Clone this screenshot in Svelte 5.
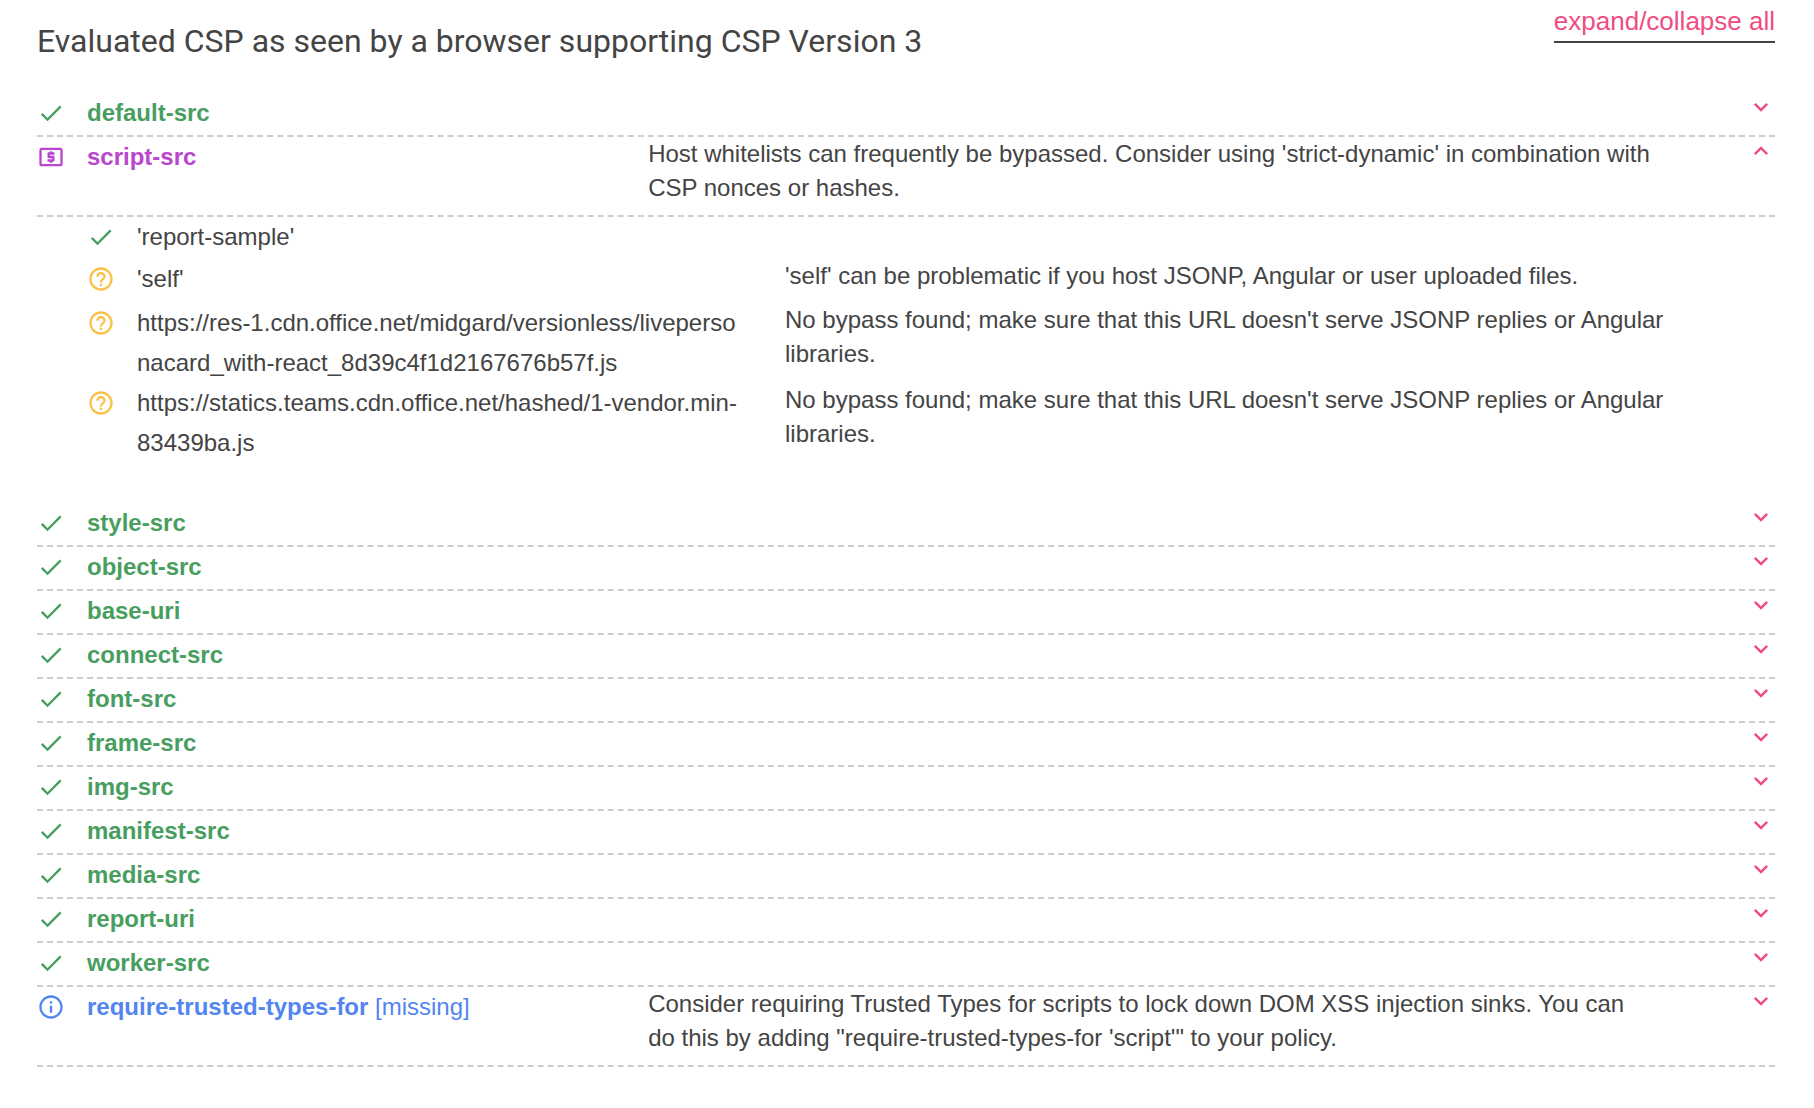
<script>
  const CHECK = 'M9 16.2L4.8 12l-1.4 1.4L9 19 21 7l-1.4-1.4L9 16.2z';

  const icons = {
    ok: CHECK,
    medium:
      'M11 17h2v-1h1c.55 0 1-.45 1-1v-3c0-.55-.45-1-1-1h-3v-1h4V8h-2V7h-2v1h-1c-.55 0-1 .45-1 1v3c0 .55.45 1 1 1h3v1H9v2h2v1zm9-13H4c-1.11 0-1.99.89-1.99 2L2 18c0 1.11.89 2 2 2h16c1.11 0 2-.89 2-2V6c0-1.11-.89-2-2-2zm0 14H4V6h16v12z',
    maybe:
      'M11 18h2v-2h-2v2zm1-16C6.48 2 2 6.48 2 12s4.48 10 10 10 10-4.48 10-10S17.52 2 12 2zm0 18c-4.41 0-8-3.59-8-8s3.59-8 8-8 8 3.59 8 8-3.59 8-8 8zm0-14c-2.21 0-4 1.79-4 4h2c0-1.1.9-2 2-2s2 .9 2 2c0 2-3 1.75-3 5h2c0-2.25 3-2.5 3-5 0-2.21-1.79-4-4-4z',
    info:
      'M11 17h2v-6h-2v6zm1-15C6.48 2 2 6.48 2 12s4.48 10 10 10 10-4.48 10-10S17.52 2 12 2zm0 18c-4.41 0-8-3.59-8-8s3.59-8 8-8 8 3.59 8 8-3.59 8-8 8zM11 9h2V7h-2v2z',
    more: 'M16.59 8.59L12 13.17 7.41 8.59 6 10l6 6 6-6z',
    less: 'M12 8l-6 6 1.41 1.41L12 10.83l4.59 4.58L18 14z'
  };

  const noBypass =
    "No bypass found; make sure that this URL doesn't serve JSONP replies or Angular libraries.";

  let directives = $state([
    { name: 'default-src', level: 'ok', open: false },
    {
      name: 'script-src',
      level: 'medium',
      open: true,
      note: "Host whitelists can frequently be bypassed. Consider using 'strict-dynamic' in combination with CSP nonces or hashes.",
      values: [
        { text: "'report-sample'", level: 'ok' },
        {
          text: "'self'",
          level: 'maybe',
          note: "'self' can be problematic if you host JSONP, Angular or user uploaded files."
        },
        {
          text: 'https://res-1.cdn.office.net/midgard/versionless/livepersonacard_with-react_8d39c4f1d2167676b57f.js',
          level: 'maybe',
          note: noBypass
        },
        {
          text: 'https://statics.teams.cdn.office.net/hashed/1-vendor.min-83439ba.js',
          level: 'maybe',
          note: noBypass
        }
      ]
    },
    { name: 'style-src', level: 'ok', open: false },
    { name: 'object-src', level: 'ok', open: false },
    { name: 'base-uri', level: 'ok', open: false },
    { name: 'connect-src', level: 'ok', open: false },
    { name: 'font-src', level: 'ok', open: false },
    { name: 'frame-src', level: 'ok', open: false },
    { name: 'img-src', level: 'ok', open: false },
    { name: 'manifest-src', level: 'ok', open: false },
    { name: 'media-src', level: 'ok', open: false },
    { name: 'report-uri', level: 'ok', open: false },
    { name: 'worker-src', level: 'ok', open: false },
    {
      name: 'require-trusted-types-for',
      level: 'info',
      open: false,
      missing: true,
      note: "Consider requiring Trusted Types for scripts to lock down DOM XSS injection sinks. You can do this by adding \"require-trusted-types-for 'script'\" to your policy."
    }
  ]);

  function toggleAll() {
    const open = !directives.some((d) => d.open);
    for (const d of directives) d.open = open;
  }
</script>

{#snippet icon(name)}
  <svg class="icon" viewBox="0 0 24 24" aria-hidden="true"><path d={icons[name]} /></svg>
{/snippet}

<main>
  <header>
    <h1>Evaluated CSP as seen by a browser supporting CSP Version 3</h1>
    <button class="all" type="button" onclick={toggleAll}>expand/collapse all</button>
  </header>

  {#each directives as d (d.name)}
    <section>
      <div class="row">
        <span class="mark {d.level}">{@render icon(d.level)}</span>
        <div class="name {d.level}"><strong>{d.name}</strong>{d.missing ? ' [missing]' : ''}</div>
        <div class="note">{#if d.note}<p>{d.note}</p>{/if}</div>
        <button
          class="toggle"
          type="button"
          aria-expanded={d.open}
          aria-label="Toggle {d.name}"
          onclick={() => (d.open = !d.open)}
        >
          {@render icon(d.open ? 'less' : 'more')}
        </button>
      </div>
      {#if d.open && d.values}
        <ul>
          {#each d.values as v (v.text)}
            <li>
              <span class="mark {v.level}">{@render icon(v.level)}</span>
              <div class="value">{v.text}</div>
              <div class="note">{#if v.note}<p>{v.note}</p>{/if}</div>
            </li>
          {/each}
        </ul>
      {/if}
    </section>
  {/each}
</main>

<style>
  :global(body) {
    margin: 0;
    background: #fff;
  }

  main {
    padding: 0 39px 40px 37px;
    color: #444;
    font: 24px/40px 'Liberation Sans', Arial, Helvetica, sans-serif;
  }

  header {
    display: flex;
    justify-content: space-between;
    align-items: flex-start;
    padding-bottom: 31px;
  }

  h1 {
    margin: 0;
    padding-top: 20px;
    font: 400 32px/42px Roboto, sans-serif;
  }

  button {
    margin: 0;
    padding: 0;
    border: 0;
    background: none;
    color: #f04c81;
    font: inherit;
    cursor: pointer;
  }

  .all {
    padding-top: 1px;
    border-bottom: 2px solid #444;
    font-size: 26px;
  }

  .row {
    display: grid;
    grid-template-columns: 50px minmax(0, 43fr) minmax(0, 77fr) 122px;
    min-height: 42px;
    border-bottom: 2px dashed #ccc;
  }

  ul {
    margin: 0;
    padding: 0 0 40px 50px;
    list-style: none;
  }

  li {
    display: grid;
    grid-template-columns: 50px minmax(0, 36fr) minmax(0, 55fr);
    min-height: 42px;
  }

  li .note {
    padding-right: 40px;
  }

  .icon {
    display: block;
    width: 28px;
    height: 28px;
    fill: currentColor;
  }

  .mark {
    padding-top: 6px;
  }

  .value {
    padding-right: 40px;
    word-break: break-all;
  }

  .note p {
    margin: 0;
    padding-bottom: 10px;
    line-height: 34px;
  }

  .toggle {
    justify-self: end;
    align-self: start;
  }

  .ok {
    color: #489e5f;
  }

  .medium {
    color: #ba46ce;
  }

  .maybe {
    color: #fbc044;
  }

  .info {
    color: #5385f0;
  }
</style>
